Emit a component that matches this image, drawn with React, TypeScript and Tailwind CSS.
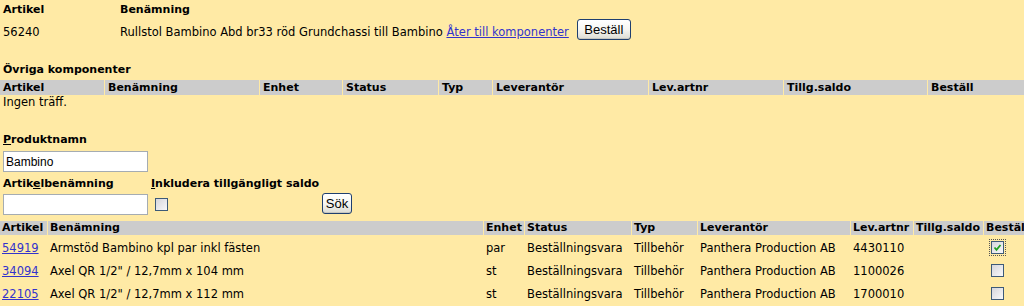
import React from 'react';

const font = "font-['DejaVu_Sans',Verdana,sans-serif]";

const topCols = ['w-[104px]', 'w-[154px]', 'w-[82px]', 'w-[95px]', 'w-[53px]', 'w-[155px]', 'w-[134px]', 'w-[143px]', 'flex-1'];
const topHeads = ['Artikel', 'Benämning', 'Enhet', 'Status', 'Typ', 'Leverantör', 'Lev.artnr', 'Tillg.saldo', 'Beställ'];

const cols = ['w-[47px]', 'w-[435px]', 'w-[40px]', 'w-[106px]', 'w-[65px]', 'w-[152px]', 'w-[62px]', 'w-[69px]', 'w-[70px]'];
const heads = ['Artikel', 'Benämning', 'Enhet', 'Status', 'Typ', 'Leverantör', 'Lev.artnr', 'Tillg.saldo', 'Beställ'];

const rows = [
  { art: '54919', name: 'Armstöd Bambino kpl par inkl fästen', unit: 'par', levnr: '4430110', checked: true },
  { art: '34094', name: 'Axel QR 1/2" / 12,7mm x 104 mm', unit: 'st', levnr: '1100026', checked: false },
  { art: '22105', name: 'Axel QR 1/2" / 12,7mm x 112 mm', unit: 'st', levnr: '1700010', checked: false },
];

const XpButton = ({ label, className }: { label: string; className: string }) => (
  <button
    type="button"
    className={`${className} shrink-0 rounded-[3px] border border-[#1f3f6f] bg-gradient-to-b from-white via-[#f6f6f2] to-[#dcdcd4] font-['Liberation_Sans',Arial,sans-serif] text-[13px] leading-none text-black shadow-[inset_0_-1px_0_#c7c7bf]`}
  >
    {label}
  </button>
);

const Checkbox = ({ checked, className }: { checked?: boolean; className: string }) => (
  <span
    className={`${className} block h-[13px] w-[13px] shrink-0 border border-[#3d5a78] bg-gradient-to-br from-[#d6d6dc] to-[#f8f8fa] ${
      checked ? 'outline outline-1 outline-dotted outline-[#555] outline-offset-1' : ''
    }`}
  >
    {checked && (
      <svg viewBox="0 0 11 11" className="h-[11px] w-[11px]">
        <polyline points="2.5,5.5 4.5,7.8 8.5,3" fill="none" stroke="#21a121" strokeWidth="1.8" />
      </svg>
    )}
  </span>
);

export default function App() {
  return (
    <div className={`${font} h-[306px] w-[1024px] overflow-hidden bg-[#ffeaa5] text-[11.5px] leading-[14px] text-black`}>
      {/* article header */}
      <div className="flex pt-[3px] text-[11px] font-bold">
        <div className="w-[117px] pl-[3px]">Artikel</div>
        <div className="pl-[3px]">Benämning</div>
      </div>
      <div className="mt-[2px] flex items-start">
        <div className="w-[117px] pl-[3px] pt-[6px]">56240</div>
        <div className="flex items-start pl-[3px]">
          <span className="whitespace-nowrap pt-[6px]">
            Rullstol Bambino Abd br33 röd Grundchassi till Bambino{' '}
            <a href="#" className="text-[#3333cc] underline">Åter till komponenter</a>
          </span>
          <XpButton label="Beställ" className="ml-[8px] h-[21px] w-[54px]" />
        </div>
      </div>

      {/* other components */}
      <div className="mt-[23px] pl-[3px] text-[11px] font-bold">Övriga komponenter</div>
      <div className="mt-[3px] flex h-[15px] gap-x-px text-[11px] font-bold leading-[15px]">
        {topHeads.map((h, i) => (
          <div key={h} className={`${topCols[i]} bg-[#cccccc] pl-[3px]`}>{h}</div>
        ))}
      </div>
      <div className="pl-[3px]">Ingen träff.</div>

      {/* search form */}
      <div className="mt-[24px] pl-[3px]">
        <div className="text-[11px] font-bold"><span className="underline">P</span>roduktnamn</div>
        <div className="mt-[4px] flex h-[21px] w-[145px] items-center border border-[#a5acb2] bg-white pl-[2px] font-['Liberation_Sans',Arial,sans-serif] text-[12px]">
          Bambino
        </div>
        <div className="mt-[5px] flex text-[11px] font-bold">
          <div className="w-[148px]">Artik<span className="underline">e</span>lbenämning</div>
          <div><span className="underline">I</span>nkludera tillgängligt saldo</div>
        </div>
        <div className="mt-[3px] flex items-start">
          <div className="h-[21px] w-[145px] border border-[#a5acb2] bg-white" />
          <Checkbox className="ml-[7px] mt-[4px]" />
          <XpButton label="Sök" className="ml-[154px] -mt-px h-[21px] w-[30px]" />
        </div>
      </div>

      {/* result table */}
      <div className="mt-[6px] flex h-[14px] gap-x-px text-[11px] font-bold">
        {heads.map((h, i) => (
          <div key={h} className={`${cols[i]} shrink-0 whitespace-nowrap bg-[#cccccc] pl-[2px]`}>{h}</div>
        ))}
      </div>
      <div className="mt-px">
        {rows.map((r) => (
          <div key={r.art} className="flex h-[23px] items-center gap-x-px whitespace-nowrap">
            <div className={`${cols[0]} shrink-0 pl-[2px]`}>
              <a href="#" className="text-[#3333cc] underline">{r.art}</a>
            </div>
            <div className={`${cols[1]} shrink-0 pl-[2px]`}>{r.name}</div>
            <div className={`${cols[2]} shrink-0 pl-[2px]`}>{r.unit}</div>
            <div className={`${cols[3]} shrink-0 pl-[2px]`}>Beställningsvara</div>
            <div className={`${cols[4]} shrink-0 pl-[2px]`}>Tillbehör</div>
            <div className={`${cols[5]} shrink-0 pl-[2px]`}>Panthera Production AB</div>
            <div className={`${cols[6]} shrink-0 pl-[2px]`}>{r.levnr}</div>
            <div className={`${cols[7]} shrink-0`} />
            <div className={`${cols[8]} shrink-0`}>
              <Checkbox checked={r.checked} className="ml-[7px]" />
            </div>
          </div>
        ))}
      </div>
    </div>
  );
}
